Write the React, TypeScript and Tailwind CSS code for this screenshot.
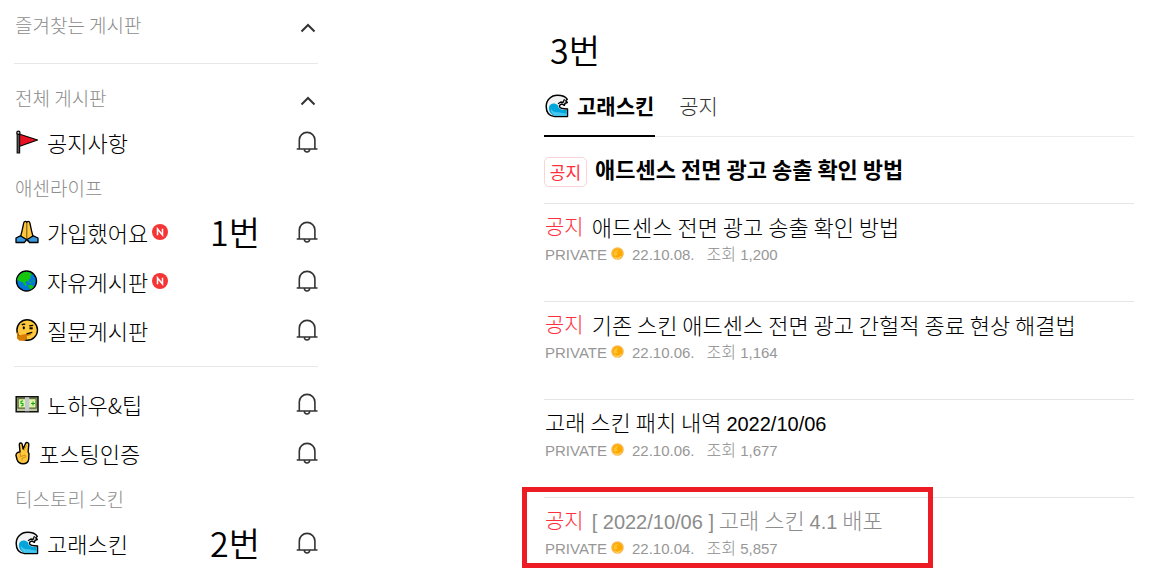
import type { ReactNode } from "react";

type Board = {
  name: string;
  icon: ReactNode;
  isNew?: boolean;
  note?: string;
};

type Post = {
  notice?: boolean;
  title: ReactNode;
  date: string;
  views: string;
  read?: boolean;
  marked?: boolean;
};

function FlagIcon() {
  return (
    <svg className="h-6 w-6" viewBox="0 0 24 24" aria-hidden="true">
      <path d="M4 4 22.500 10 4 16.500Z" fill="#e81224" stroke="#000" strokeWidth="1.300" strokeLinejoin="round" />
      <path d="M2.200 3v19.800h2.400V3" fill="#555" stroke="#111" strokeWidth="1.200" />
      <circle cx="3.400" cy="2.800" r="1.600" fill="#ccc" stroke="#000" strokeWidth="1.200" />
    </svg>
  );
}

function PrayIcon() {
  return (
    <svg className="h-6 w-6" viewBox="0 0 24 24" aria-hidden="true">
      <g stroke="#000" strokeWidth="1.300" strokeLinejoin="round">
        <path d="M11.800 2.500c0-1.500-2.600-1.500-3 .2L7 11l-1.300 5 5 5 1.100-2 1.100 2 5-5-1.300-5-1.800-8.300c-.4-1.700-3-1.700-3-.2Z" fill="#ffc83d" />
        <path d="M5.300 15.800 1 18v4.500h8.500l2-3Z" fill="#3a96dd" />
        <path d="M18.300 15.800 23 18v4.500h-8.500l-2.300-3Z" fill="#3a96dd" />
      </g>
      <path d="M11.800 3v16" stroke="#694e1c" strokeWidth="1" />
    </svg>
  );
}

function EarthIcon() {
  return (
    <svg className="h-6 w-6" viewBox="0 0 24 24" aria-hidden="true">
      <circle cx="11.500" cy="12" r="10" fill="#0078d7" stroke="#000" strokeWidth="1.400" />
      <path d="M2.300 11c.5-4.500 4.500-8 9.500-8.300l4 1.300 1.200 2-2 1 1 2-2.500 1.500.5 2.500-2-1-2 1 2 3.500-1.500.5-3-4-2.500-.5Z" fill="#16c60c" />
      <path d="m13 16.500 3-.8 3 1.800-3 3-2-1.500ZM17.500 11l2 1-.5 1.500ZM14 13.500l2-.8.300 1.500Z" fill="#16c60c" />
    </svg>
  );
}

function ThinkIcon() {
  return (
    <svg className="h-6 w-6" viewBox="0 0 24 24" aria-hidden="true">
      <circle cx="12.200" cy="12" r="10.300" fill="#ffc83d" stroke="#000" strokeWidth="1.400" />
      <path d="M2 14.500v6l2.500 2.300h5l2.500-2.300v-2.500l4-1-.3-1.600-8 1-4 1.400-.2-3.500Z" fill="#d67d00" />
      <path d="M6.800 7.200c1-1.200 2.300-1.300 3.500-.8M14.200 7.800l4-.5M11.500 15.800l5.800-1.500" stroke="#000" strokeWidth="1.200" fill="none" />
      <ellipse cx="8.800" cy="9.800" rx="1.100" ry="1.600" />
      <path d="M14.500 10.300h3.200" stroke="#000" strokeWidth="2" />
    </svg>
  );
}

function MoneyIcon() {
  return (
    <svg className="h-6 w-6" viewBox="0 0 24 24" aria-hidden="true">
      <path d="M1.200 4.700h21.800v15H1.200Z" fill="#8e9b6b" stroke="#111" strokeWidth="1.500" />
      <path d="M3.200 6.700h17.800v9.300H3.200Z" fill="#dff5a6" stroke="#566238" />
      <path d="M2 18h20" stroke="#d5dfb8" strokeWidth="1.300" />
      <path d="M10 5.300h4.300v14H10Z" fill="#c6c9cf" />
      <path d="M8 8.800 6 9.500v1.700l2 .5v1.800l-2 .5M18 9.500v4M16 11.500h4" stroke="#16a51c" strokeWidth="1.100" fill="none" />
    </svg>
  );
}

function VictoryIcon() {
  return (
    <svg className="h-6 w-4" viewBox="0 0 16 24" aria-hidden="true">
      <path
        d="M5 11 4.300 3.500c0-1.800 2.500-2 2.900-.2l1 4.700L10.500 2.500c.8-1.800 3.700-1 3.300 1l-.7 7.500.9 1.500-.3 5.700c-.4 3-2.700 4.600-5.700 4.600-3.300 0-5-1.400-6-4.300L1 14.500c-.2-2 1.500-3.500 4-3.500Z"
        fill="#ffc83d"
        stroke="#000"
        strokeWidth="1.400"
        strokeLinejoin="round"
      />
      <path d="M5 11.500 5.500 15M4.500 16l5.500-2 1 1.800-4 1.500v2.400" stroke="#d18a18" fill="none" />
      <path d="m9 10 2.300-5.500" stroke="#d18a18" strokeWidth=".8" />
    </svg>
  );
}

function WaveIcon() {
  return (
    <svg className="h-6 w-6" viewBox="0 0 24 24" aria-hidden="true">
      <path
        d="M22.500 22.500H9.500C4 22 1.200 18 1.200 12.500 1.200 6 6 1.300 12.500 1.300c4.500 0 8 1.300 9.800 4l-1.500 1.500 1.500 1.700-2.200.8-.7 2-2.200-1.200c-2 .3-3 1.300-2.700 2.600.4 1.600 3 2.300 8 2.300Z"
        fill="#f2f2f2"
        stroke="#000"
        strokeWidth="1.500"
        strokeLinejoin="round"
      />
      <path d="M4 13c.8-3.800 5.500-4.800 8.800-2 .2 3.500 3 5.200 9 5v5.800H9.800C6 21 3.500 17.500 4 13Z" fill="#00a5dc" />
      <path d="M5.500 14c1.500 3.500 4 4.500 8 4.300 3 .2 4.500 1.400 8.200 1.200v2.300H10c-2.800-1-4.300-4-4.500-7.800Z" fill="#45c6ee" />
      <path d="m13 9.800 3-1.800 2 .5 1.500-3.300" stroke="#000" strokeWidth="1.300" fill="none" />
    </svg>
  );
}

function BellIcon() {
  return (
    <svg className="h-[22px] w-[22px]" viewBox="0 0 22 22" fill="none" stroke="#333" strokeWidth="1.600" aria-hidden="true">
      <path d="M3.300 18V9a7.800 7.600 0 0 1 15.600 0v9" />
      <path d="M.7 18h20.800M8.300 18.300c.2 3.500 5.200 3.500 5.400 0" />
    </svg>
  );
}

function ChevronButton({ label }: { label: string }) {
  return (
    <button type="button" aria-label={label} className="mr-0.5 mt-1.5">
      <svg className="h-[10px] w-4" viewBox="0 0 16 10" fill="none" stroke="#333" strokeWidth="2" aria-hidden="true">
        <path d="m1.500 8.500 6.500-6.500 6.500 6.500" />
      </svg>
    </button>
  );
}

function NewBadge() {
  return (
    <svg className="ml-1 h-4 w-4" viewBox="0 0 16 16" role="img" aria-label="새 글">
      <circle cx="8" cy="8" r="8" fill="#f53535" />
      <path d="M5.500 11.200V4.900l5 6.100V4.800" fill="none" stroke="#fff" strokeWidth="1.500" />
    </svg>
  );
}

function CoinIcon() {
  return (
    <svg className="mr-2 mb-1 ml-1 h-[13px] w-[13px]" viewBox="0 0 13 13" aria-hidden="true">
      <circle cx="6.500" cy="6.500" r="6.300" fill="#f8b84c" />
      <circle cx="6.500" cy="6.500" r="4.800" fill="#ffa800" />
      <path d="M2.500 6.500C3 4 5 2.500 7.500 3L5.500 5.500l1.300 1.800L4.500 9C3.300 8.500 2.500 7.500 2.500 6.500Z" fill="#ffc42e" />
      <path d="M3.500 10.300c2 1.500 5.200 1.200 6.700-1.300" stroke="#ffe27a" fill="none" />
    </svg>
  );
}

function GroupTitle({ children }: { children: ReactNode }) {
  return (
    <h3 className="flex h-[41px] items-center pt-0.5 pl-px text-[19px] text-[#8c8c8c]">
      {children}
    </h3>
  );
}

function BoardItem({ board }: { board: Board }) {
  return (
    <li className="flex h-[49px] items-center pb-px">
      <a href="#" className="flex w-[196px] items-center pl-px text-[22px] text-black">
        {board.icon}
        <span className="ml-2">{board.name}</span>
        {board.isNew && <NewBadge />}
      </a>
      {board.note && <Note>{board.note}</Note>}
      <button type="button" aria-label={`${board.name} 알림`} className="ml-auto">
        <BellIcon />
      </button>
    </li>
  );
}

function Note({ children }: { children: ReactNode }) {
  return <strong className="text-[34px] leading-none font-[350] text-black">{children}</strong>;
}

function Latin({ children }: { children: ReactNode }) {
  return <span className="font-['Liberation_Sans',sans-serif] text-[20px] font-normal">{children}</span>;
}

function PostRow({ post }: { post: Post }) {
  return (
    <li className="relative h-[98px] border-t border-[#e5e5e5] pt-1.5 pl-px">
      {post.marked && (
        <div className="pointer-events-none absolute -top-[11px] -left-[22px] h-[81px] w-[411px] border-[5px] border-[#ed1c24]" />
      )}
      <a
        href="#"
        className={`flex h-8 items-center text-[22px] whitespace-pre ${
          post.read ? "text-[#8c8c8c]" : "text-black"
        }`}
      >
        {post.notice && <span className="mr-2 text-[21px] text-[#ff2f3b]">공지</span>}
        <span>{post.title}</span>
      </a>
      <div className="mt-px flex h-6 items-center font-['Liberation_Sans',sans-serif] text-[15px] leading-6 font-normal text-[#979797]">
        <span>PRIVATE</span>
        <CoinIcon />
        <span>{post.date}</span>
        <span className="ml-3">
          <span className="font-['Noto_Sans_CJK_KR',sans-serif] text-[16px] leading-none font-light text-[#8c8c8c]">
            조회
          </span>{" "}
          {post.views}
        </span>
      </div>
    </li>
  );
}

const LIFE_BOARDS: Board[] = [
  { name: "가입했어요", icon: <PrayIcon />, isNew: true, note: "1번" },
  { name: "자유게시판", icon: <EarthIcon />, isNew: true },
  { name: "질문게시판", icon: <ThinkIcon /> },
];

const TIP_BOARDS: Board[] = [
  { name: "노하우&팁", icon: <MoneyIcon /> },
  { name: "포스팅인증", icon: <VictoryIcon /> },
];

const POSTS: Post[] = [
  { notice: true, title: "애드센스 전면 광고 송출 확인 방법", date: "22.10.08.", views: "1,200" },
  { notice: true, title: "기존 스킨 애드센스 전면 광고 간헐적 종료 현상 해결법", date: "22.10.06.", views: "1,164" },
  { title: <>고래 스킨 패치 내역 <Latin>2022/10/06</Latin></>, date: "22.10.06.", views: "1,677" },
  {
    notice: true,
    title: <><Latin>[ 2022/10/06 ]</Latin> 고래 스킨 <Latin>4.1</Latin> 배포</>,
    date: "22.10.04.",
    views: "5,857",
    read: true,
    marked: true,
  },
];

export default function App() {
  return (
    <div className="flex items-start bg-white font-['Noto_Sans_CJK_KR',sans-serif] font-light">
      <nav className="ml-3.5 w-[304px] shrink-0">
        <section className="border-b border-[#e8e8e8] pb-[13px]">
          <div className="flex h-[50px] items-center justify-between">
            <h2 className="pl-px text-[19px] text-[#8c8c8c]">즐겨찾는 게시판</h2>
            <ChevronButton label="즐겨찾는 게시판 접기" />
          </div>
        </section>

        <section className="border-b border-[#e8e8e8] pt-[15px] pb-[11px]">
          <div className="mb-px flex h-[38px] items-center justify-between">
            <h2 className="pl-px text-[19px] text-[#8c8c8c]">전체 게시판</h2>
            <ChevronButton label="전체 게시판 접기" />
          </div>
          <ul>
            <BoardItem board={{ name: "공지사항", icon: <FlagIcon /> }} />
          </ul>
          <GroupTitle>애센라이프</GroupTitle>
          <ul>
            {LIFE_BOARDS.map((board) => (
              <BoardItem key={board.name} board={board} />
            ))}
          </ul>
        </section>

        <section className="pt-[13px]">
          <ul>
            {TIP_BOARDS.map((board) => (
              <BoardItem key={board.name} board={board} />
            ))}
          </ul>
          <GroupTitle>티스토리 스킨</GroupTitle>
          <ul>
            <BoardItem board={{ name: "고래스킨", icon: <WaveIcon />, note: "2번" }} />
          </ul>
        </section>
      </nav>

      <main className="mr-[25px] ml-[226px] min-w-0 flex-1 pt-8">
        <div className="flex h-9 items-center pl-1.5">
          <Note>3번</Note>
        </div>

        <div role="tablist" className="mt-2 flex h-[61px] gap-6 border-b border-[#ececec] text-[21px]">
          <button
            type="button"
            role="tab"
            aria-selected="true"
            className="-mb-px flex items-center border-b-2 border-black px-px font-bold text-black"
          >
            <WaveIcon />
            <span className="ml-2">고래스킨</span>
          </button>
          <button type="button" role="tab" aria-selected="false" className="pb-px text-[#333]">
            공지
          </button>
        </div>

        {/* 상단 고정 공지 */}
        <a href="#" className="flex h-[66px] items-center gap-2 text-black">
          <span className="mt-1 flex h-[30px] w-[43px] shrink-0 items-center justify-center rounded-[5px] border border-[#fad4d6] text-[17px] font-normal text-[#ff2f3b]">
            공지
          </span>
          <span className="pb-1 text-[22px] font-bold">애드센스 전면 광고 송출 확인 방법</span>
        </a>

        <ul>
          {POSTS.map((post, i) => (
            <PostRow key={i} post={post} />
          ))}
        </ul>
      </main>
    </div>
  );
}
